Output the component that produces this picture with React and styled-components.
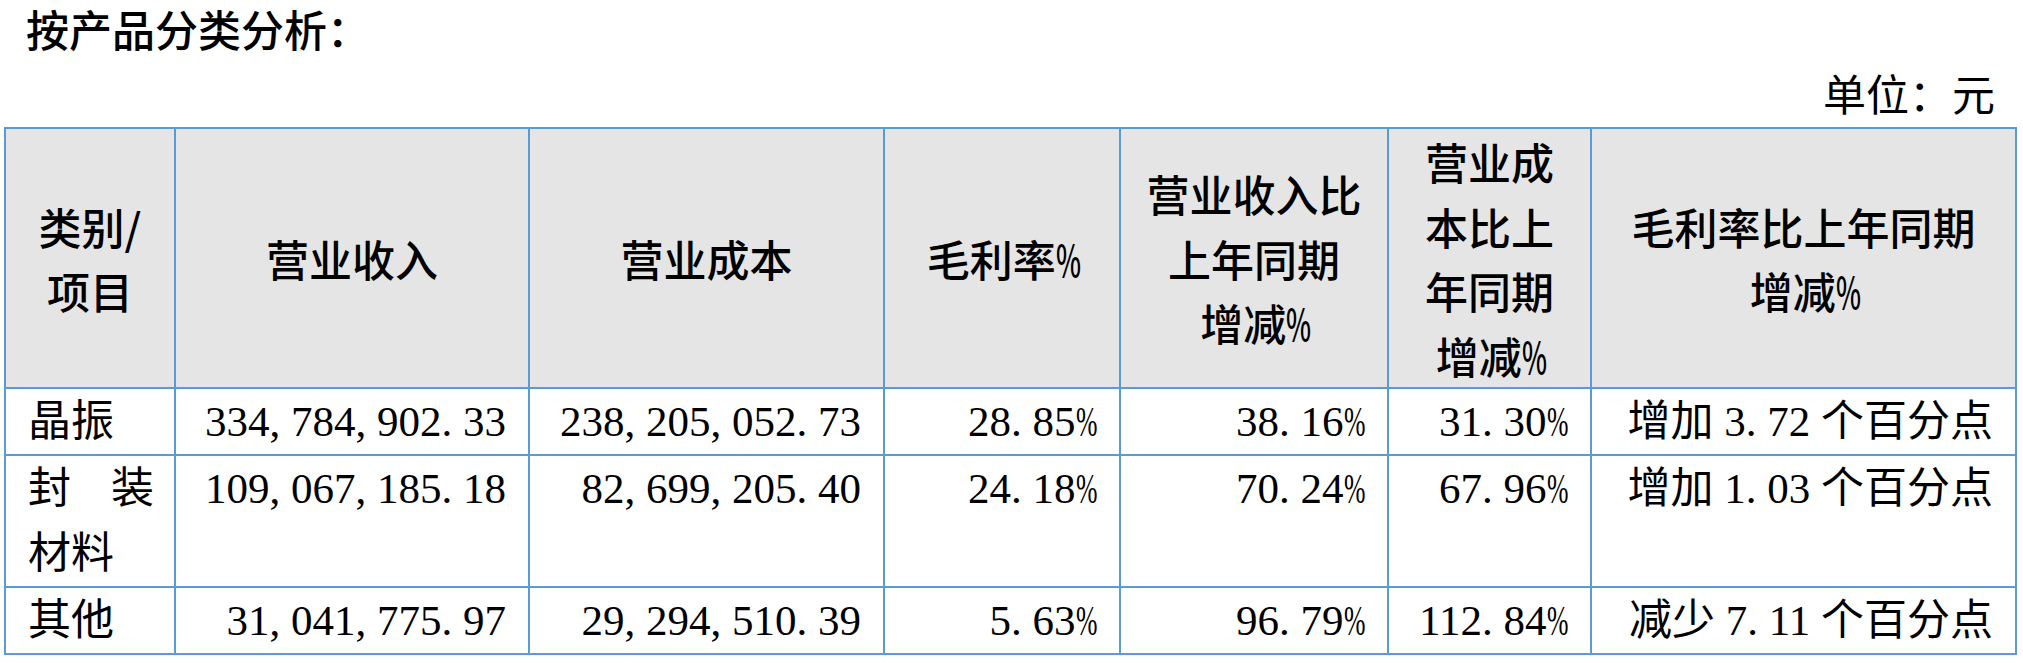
import React from "react";
import styled, { createGlobalStyle } from "styled-components";

const GlobalStyle = createGlobalStyle`
  html, body {
    margin: 0;
    padding: 0;
    background: #fff;
  }
  body {
    font-family: "Noto Sans CJK SC", sans-serif;
    color: #000;
  }
`;

const Page = styled.div`
  width: 2013px;
  padding: 0 6px 0 4px;
`;

const Title = styled.h2`
  margin: 0;
  padding-left: 22px;
  font-size: 43px;
  font-weight: 500;
  line-height: 56px;
`;

const Unit = styled.div`
  text-align: right;
  padding: 2px 22px 0 0;
  font-size: 43px;
  line-height: 69px;
`;

const Table = styled.table`
  width: 2013px;
  border-collapse: collapse;
  table-layout: fixed;
`;

const Col = styled.col`
  width: ${(p) => p.$w}px;
`;

const HeadCell = styled.th`
  background: #e5e5e5;
  border: 2px solid #5b9bd5;
  padding: 0;
  font-size: 43px;
  font-weight: 500;
  line-height: 64.5px;
  text-align: center;
  vertical-align: middle;
`;

const Cell = styled.td`
  border: 2px solid #5b9bd5;
  padding: 0 22px;
  font-family: "Liberation Serif", "Noto Sans CJK SC", serif;
  font-size: 43px;
  line-height: 65px;
  white-space: nowrap;
  vertical-align: top;
  text-align: right;
`;

const NameCell = styled(Cell)`
  padding: 0 20px 0 22px;
  white-space: normal;
  text-align: justify;
`;

// SimSun-style punctuation takes half an em
const Half = styled.span`
  display: inline-block;
  width: 0.5em;
  text-align: left;
`;

const Pct = styled.span`
  display: inline-block;
  width: 0.5em;
  white-space: nowrap;

  & > span {
    display: inline-block;
    transform: scaleX(${(p) => p.$squeeze || 0.6});
    transform-origin: left center;
  }
`;

const Text = ({ value, squeeze }) =>
  value.split("").map((ch, i) => {
    if (ch === "," || ch === ".") return <Half key={i}>{ch}</Half>;
    if (ch === "%")
      return (
        <Pct key={i} $squeeze={squeeze}>
          <span>{ch}</span>
        </Pct>
      );
    return ch;
  });

const widths = [170, 354, 355, 236, 268, 203, 425];

const headers = [
  ["类别/", "项目"],
  ["营业收入"],
  ["营业成本"],
  ["毛利率%"],
  ["营业收入比", "上年同期", "增减%"],
  ["营业成", "本比上", "年同期", "增减%"],
  ["毛利率比上年同期", "增减%"],
];

const rows = [
  {
    name: "晶振",
    values: ["334,784,902.33", "238,205,052.73", "28.85%", "38.16%", "31.30%"],
    note: "增加 3.72 个百分点",
  },
  {
    name: "封装材料",
    values: ["109,067,185.18", "82,699,205.40", "24.18%", "70.24%", "67.96%"],
    note: "增加 1.03 个百分点",
  },
  {
    name: "其他",
    values: ["31,041,775.97", "29,294,510.39", "5.63%", "96.79%", "112.84%"],
    note: "减少 7.11 个百分点",
  },
];

const App = () => {
  return (
    <Page>
      <GlobalStyle />
      <Title>按产品分类分析：</Title>
      <Unit>单位：元</Unit>
      <Table>
        <colgroup>
          {widths.map((w, i) => (
            <Col key={i} $w={w} />
          ))}
        </colgroup>
        <thead>
          <tr>
            {headers.map((lines, i) => (
              <HeadCell key={i}>
                {lines.map((line, j) => (
                  <React.Fragment key={j}>
                    {j > 0 && <br />}
                    <Text value={line} squeeze={0.62} />
                  </React.Fragment>
                ))}
              </HeadCell>
            ))}
          </tr>
        </thead>
        <tbody>
          {rows.map((row) => (
            <tr key={row.name}>
              <NameCell>{row.name}</NameCell>
              {row.values.map((v, i) => (
                <Cell key={i}>
                  <Text value={v} />
                </Cell>
              ))}
              <Cell>
                <Text value={row.note} />
              </Cell>
            </tr>
          ))}
        </tbody>
      </Table>
    </Page>
  );
};

export default App;
